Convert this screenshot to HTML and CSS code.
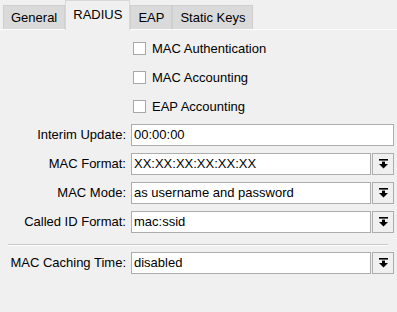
FILE: index.html
```html
<!DOCTYPE html>
<html>
<head>
<meta charset="utf-8">
<link rel="stylesheet" href="styles.css">
</head>
<body>
<div class="tabs">
  <div class="tab">General</div>
  <div class="tab active">RADIUS</div>
  <div class="tab">EAP</div>
  <div class="tab">Static Keys</div>
</div>
<div class="form">
  <div></div>
  <label class="check"><span class="box"></span>MAC Authentication</label>
  <div></div>
  <label class="check"><span class="box"></span>MAC Accounting</label>
  <div></div>
  <label class="check"><span class="box"></span>EAP Accounting</label>

  <div class="label">Interim Update:</div>
  <div class="input">00:00:00</div>

  <div class="label">MAC Format:</div>
  <div class="select"><div class="input">XX:XX:XX:XX:XX:XX</div><div class="btn"><svg width="9" height="10" viewBox="0 0 9 10"><rect x="0" y="0" width="9" height="1.6" fill="#000"/><rect x="3" y="2.6" width="3" height="3" fill="#000"/><polygon points="0,5 9,5 4.5,9.6" fill="#000"/></svg></div></div>

  <div class="label">MAC Mode:</div>
  <div class="select"><div class="input">as username and password</div><div class="btn"><svg width="9" height="10" viewBox="0 0 9 10"><rect x="0" y="0" width="9" height="1.6" fill="#000"/><rect x="3" y="2.6" width="3" height="3" fill="#000"/><polygon points="0,5 9,5 4.5,9.6" fill="#000"/></svg></div></div>

  <div class="label">Called ID Format:</div>
  <div class="select"><div class="input">mac:ssid</div><div class="btn"><svg width="9" height="10" viewBox="0 0 9 10"><rect x="0" y="0" width="9" height="1.6" fill="#000"/><rect x="3" y="2.6" width="3" height="3" fill="#000"/><polygon points="0,5 9,5 4.5,9.6" fill="#000"/></svg></div></div>

  <div class="sep"></div>

  <div class="label">MAC Caching Time:</div>
  <div class="select"><div class="input">disabled</div><div class="btn"><svg width="9" height="10" viewBox="0 0 9 10"><rect x="0" y="0" width="9" height="1.6" fill="#000"/><rect x="3" y="2.6" width="3" height="3" fill="#000"/><polygon points="0,5 9,5 4.5,9.6" fill="#000"/></svg></div></div>
</div>
</body>
</html>
```
FILE: styles.css
```css
html, body {
  margin: 0;
  background: #f0f0f0;
  font-family: "Liberation Sans", Arial, sans-serif;
  font-size: 13px;
  color: #000;
}
.tabs {
  display: flex;
  align-items: flex-end;
  height: 29px;
  padding-left: 3px;
  border-bottom: 1px solid #fcfcfc;
  box-sizing: content-box;
}
.tab {
  height: 23px;
  line-height: 23px;
  padding: 0 7px;
  background: #dadada;
  border: 1px solid #cfcfcf;
  border-bottom: none;
}
.tab.active {
  height: 29px;
  line-height: 27px;
  background: #f0f0f0;
  border-color: #d8d8d8;
  margin-bottom: -1px;
  padding: 0 7px;
  position: relative;
  z-index: 1;
}
.form {
  display: grid;
  grid-template-columns: 126px 1fr;
  column-gap: 5px;
  row-gap: 7px;
  padding: 7px 3px 0 0;
}
.label {
  text-align: right;
  line-height: 22px;
  height: 22px;
  white-space: nowrap;
}
.check {
  display: flex;
  align-items: center;
  height: 22px;
}
.box {
  width: 11px;
  height: 11px;
  border: 1px solid #a8a8a8;
  background: #fff;
  margin: 0 6px 0 2px;
}
.input {
  height: 22px;
  box-sizing: border-box;
  border: 1px solid #adadad;
  background: #fff;
  padding-left: 2px;
  line-height: 20px;
  white-space: nowrap;
  overflow: hidden;
}
.select {
  display: flex;
  gap: 1px;
  height: 22px;
}
.select .input {
  flex: 1;
}
.btn {
  width: 22px;
  height: 22px;
  box-sizing: border-box;
  border: 1px solid #adadad;
  background: #f0f0f0;
  display: flex;
  align-items: center;
  justify-content: center;
}
.sep {
  grid-column: 1 / -1;
  border-top: 1px solid #c8c8c8;
  border-bottom: 1px solid #ffffff;
  height: 0;
  margin: 4px 6px -1px 8px;
}
```
